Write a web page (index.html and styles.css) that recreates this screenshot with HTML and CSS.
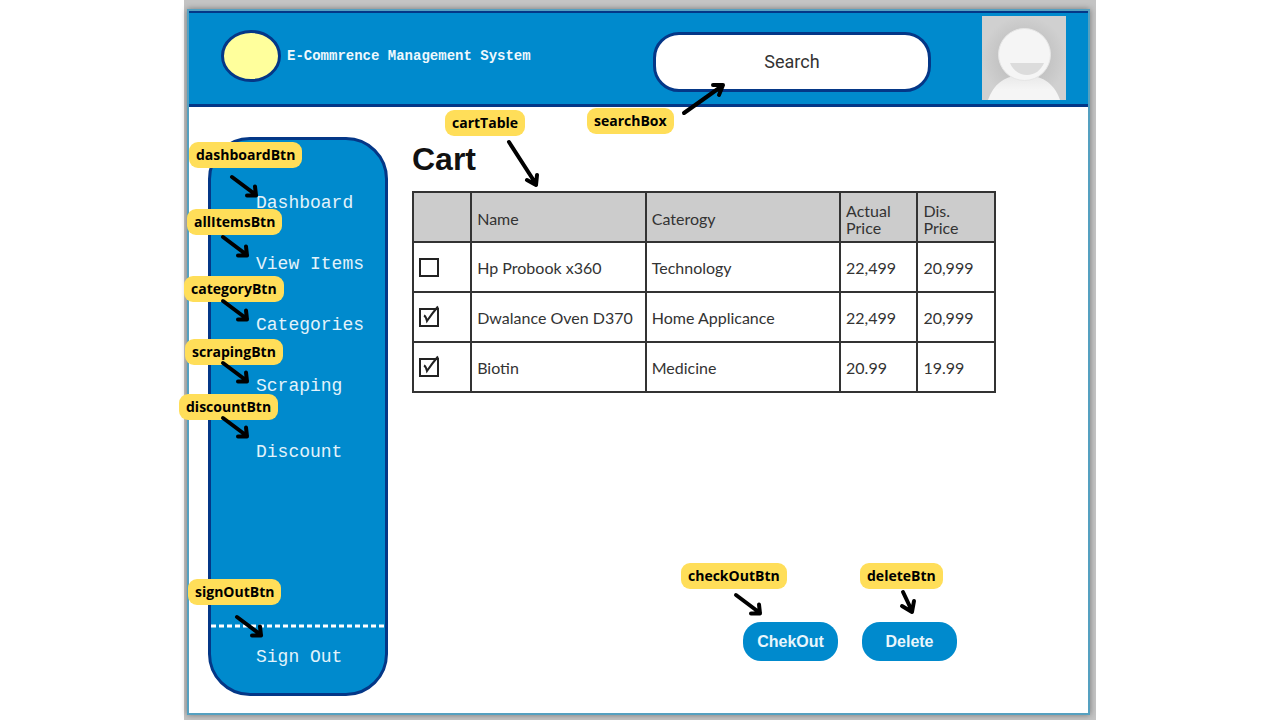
FILE: index.html
```html
<!DOCTYPE html>
<html lang="en">
<head>
<meta charset="utf-8">
<meta name="viewport" content="width=device-width, initial-scale=1">
<title>E-Commrence Management System</title>
<link rel="stylesheet" href="styles.css">
</head>
<body>
<svg class="defs" aria-hidden="true">
  <symbol id="arrow" viewBox="0 0 32 26"><path d="M3 3 27 21M26 12.500 27 21.500 18 21.500"/></symbol>
  <symbol id="tick" viewBox="0 0 20 22"><path d="M5 10.500 Q7 11.500 8 16 Q13 8.500 19 1.500"/></symbol>
</svg>
<div class="backdrop">
  <div class="frame">
    <header class="topbar">
      <div class="brand">
        <svg class="logo" viewBox="0 0 60 52" aria-hidden="true"><ellipse cx="30" cy="26" rx="28.500" ry="24.500"/></svg>
        <span class="brand-name">E-Commrence Management System</span>
      </div>
      <div class="search anchor">
        <input class="search-box" type="text" placeholder="Search" aria-label="Search">
        <div class="note note-search">searchBox
          <svg class="arrow arrow-search" viewBox="0 0 48 38" aria-hidden="true"><path d="M5 33 43 6M34 5 44 5 40 15"/></svg>
        </div>
      </div>
      <svg class="avatar" viewBox="0 0 84 84" role="img" aria-label="Profile picture">
        <defs>
          <radialGradient id="shade" cx="50%" cy="50%" r="50%"><stop offset="0.600" stop-color="#c4c4c4"/><stop offset="1" stop-color="#d0d0d0"/></radialGradient>
          <linearGradient id="body" x1="0" y1="0" x2="0" y2="1"><stop offset="0" stop-color="#e8e8e8"/><stop offset="0.600" stop-color="#f5f5f5"/></linearGradient>
        </defs>
        <rect width="84" height="84" fill="url(#shade)"/>
        <path d="M6 84C12 66 26 59 42 59s30 7 36 25z" fill="url(#body)"/>
        <circle cx="42.500" cy="38.500" r="26" fill="#f5f5f5" stroke="#e6e6e6"/>
        <path d="M28 47h34c-3 7-9 12-17 12s-14-5-17-12z" fill="#dcdcdc"/>
      </svg>
    </header>

    <div class="content">
      <nav class="sidebar" aria-label="Main">
        <ul class="menu">
          <li class="anchor"><button class="menu-btn" type="button">Dashboard</button>
            <div class="note note-dashboard">dashboardBtn<svg class="arrow" aria-hidden="true"><use href="#arrow"/></svg></div></li>
          <li class="anchor"><button class="menu-btn" type="button">View Items</button>
            <div class="note note-items">allItemsBtn<svg class="arrow" aria-hidden="true"><use href="#arrow"/></svg></div></li>
          <li class="anchor"><button class="menu-btn" type="button">Categories</button>
            <div class="note note-category">categoryBtn<svg class="arrow" aria-hidden="true"><use href="#arrow"/></svg></div></li>
          <li class="anchor"><button class="menu-btn" type="button">Scraping</button>
            <div class="note note-scraping">scrapingBtn<svg class="arrow" aria-hidden="true"><use href="#arrow"/></svg></div></li>
        </ul>
        <ul class="menu">
          <li class="anchor"><button class="menu-btn" type="button">Discount</button>
            <div class="note note-discount">discountBtn<svg class="arrow" aria-hidden="true"><use href="#arrow"/></svg></div></li>
        </ul>
        <div class="account anchor">
          <svg class="divider" aria-hidden="true"><line x1="0" y1="2" x2="100%" y2="2"/></svg>
          <button class="menu-btn" type="button">Sign Out</button>
          <div class="note note-signout">signOutBtn<svg class="arrow" aria-hidden="true"><use href="#arrow"/></svg></div>
        </div>
      </nav>

      <main class="cart">
        <h1 class="title">Cart</h1>
        <div class="table-wrap anchor">
          <table class="cart-table">
            <colgroup><col class="c-pick"><col class="c-name"><col class="c-cat"><col class="c-price"><col class="c-price"></colgroup>
            <thead>
              <tr><th></th><th>Name</th><th>Caterogy</th><th>Actual<br>Price</th><th>Dis.<br>Price</th></tr>
            </thead>
            <tbody>
              <tr><td><span class="tick"><input type="checkbox" aria-label="Hp Probook x360"><svg aria-hidden="true"><use href="#tick"/></svg></span></td><td>Hp Probook x360</td><td>Technology</td><td>22,499</td><td>20,999</td></tr>
              <tr><td><span class="tick"><input type="checkbox" checked aria-label="Dwalance Oven D370"><svg aria-hidden="true"><use href="#tick"/></svg></span></td><td>Dwalance Oven D370</td><td>Home Applicance</td><td>22,499</td><td>20,999</td></tr>
              <tr><td><span class="tick"><input type="checkbox" checked aria-label="Biotin"><svg aria-hidden="true"><use href="#tick"/></svg></span></td><td>Biotin</td><td>Medicine</td><td>20.99</td><td>19.99</td></tr>
            </tbody>
          </table>
          <div class="note note-table">cartTable
            <svg class="arrow arrow-table" viewBox="0 0 36 52" aria-hidden="true"><path d="M4 5 31 47M22 43 31 48 32 38"/></svg>
          </div>
        </div>
        <div class="actions">
          <div class="anchor"><button class="action" type="button">ChekOut</button>
            <div class="note note-checkout">checkOutBtn<svg class="arrow" aria-hidden="true"><use href="#arrow"/></svg></div></div>
          <div class="anchor"><button class="action" type="button">Delete</button>
            <div class="note note-delete">deleteBtn<svg class="arrow arrow-delete" viewBox="0 0 20 28" aria-hidden="true"><path d="M5 4 14 23M4 18 14 24 16 13"/></svg></div></div>
        </div>
      </main>
    </div>
  </div>
</div>
</body>
</html>
```
FILE: styles.css
```css
:root {
  --blue: #008acd;
  --navy: #043787;
  --ink: #333;
  --label: #ffde59;
}

* { box-sizing: border-box; }

body {
  margin: 0;
  background: #fff;
  font-family: "Liberation Sans", Arial, sans-serif;
}

.defs { display: none; }
.anchor { position: relative; }

.backdrop {
  display: flex;
  width: 100%;
  max-width: 912px;
  min-height: 100vh;
  margin: 0 auto;
  padding: 9px 6px 5px 3px;
  background: #c4c4c4;
}

.frame {
  display: flex;
  flex: 1;
  flex-direction: column;
  background: #fff;
  border: 2px solid #55a0c0;
  box-shadow: 0 0 6px rgba(0, 0, 0, 0.4);
}

.topbar {
  display: flex;
  align-items: center;
  min-height: 96px;
  padding: 0 22px 2px 32px;
  background: var(--blue);
  border-top: 2px solid var(--navy);
  border-bottom: 3px solid var(--navy);
}

.brand {
  display: flex;
  align-items: center;
  gap: 6px;
  padding-bottom: 4px;
}

.logo {
  width: 60px;
  height: 52px;
  fill: #ffff9c;
  stroke: var(--navy);
  stroke-width: 3;
}

.brand-name {
  color: #eef8fd;
  font: bold 14px/20px "Courier New", "Liberation Mono", monospace;
}

.search {
  width: 278px;
  margin: 8px 51px 0 auto;
}

.search-box {
  display: block;
  width: 100%;
  height: 60px;
  padding: 0 24px;
  border: 3px solid var(--navy);
  border-radius: 26px;
  background: #fff;
  color: var(--ink);
  font: 18px Roboto, "Liberation Sans", sans-serif;
  text-align: center;
  appearance: none;
}

.search-box::placeholder { color: var(--ink); opacity: 1; }

.avatar { width: 84px; height: 84px; }

.content {
  display: flex;
  flex: 1;
  gap: 24px;
  padding: 30px 20px 17px 19px;
}

.sidebar {
  display: flex;
  flex: 0 0 180px;
  flex-direction: column;
  gap: 40px;
  padding-top: 50px;
  background: var(--blue);
  border: 3px solid var(--navy);
  border-radius: 42px;
}

.menu {
  display: flex;
  flex-direction: column;
  gap: 35px;
  margin: 0;
  padding: 0;
  list-style: none;
}

.menu-btn {
  display: block;
  width: 100%;
  padding: 0 0 0 45px;
  border: 0;
  background: none;
  color: #e3f3fb;
  font: 18px/26px "Courier New", "Liberation Mono", monospace;
  text-align: left;
  white-space: nowrap;
}

.account {
  display: flex;
  flex-direction: column;
  gap: 16px;
  margin-top: auto;
  padding-bottom: 23px;
}

.divider {
  width: 100%;
  height: 4px;
  stroke: #fff;
  stroke-width: 3;
  stroke-dasharray: 5 3;
}

.cart {
  display: flex;
  flex: 1;
  flex-direction: column;
  min-width: 0;
}

.title {
  margin: 4px 0 14px;
  color: #111;
  font-size: 32px;
  line-height: 36px;
}

.table-wrap { width: 89%; }

.cart-table {
  width: 100%;
  border-collapse: collapse;
  table-layout: fixed;
  color: var(--ink);
  font: 16px/17px Lato, "Liberation Sans", sans-serif;
}

.c-pick { width: 10%; }
.c-name { width: 30%; }
.c-cat { width: 33.4%; }
.c-price { width: 13.3%; }

.cart-table th,
.cart-table td {
  height: 50px;
  padding: 0 5px;
  border: 2px solid var(--ink);
  font-weight: 400;
  text-align: left;
}

.cart-table th { background: #ccc; padding-top: 3px; }

.tick {
  display: block;
  position: relative;
  width: 20px;
  height: 19px;
}

.tick input {
  display: block;
  width: 100%;
  height: 100%;
  margin: 0;
  border: 2px solid #222;
  appearance: none;
}

.tick svg {
  display: none;
  position: absolute;
  left: 0;
  bottom: 0;
  width: 20px;
  height: 22px;
  fill: none;
  stroke: #222;
  stroke-width: 2;
  pointer-events: none;
}

.tick input:checked + svg { display: block; }

.actions {
  display: flex;
  justify-content: flex-end;
  gap: 24px;
  margin-top: auto;
  padding: 0 111px 35px 0;
}

.action {
  display: block;
  width: 95px;
  height: 39px;
  padding: 0;
  border: 0;
  border-radius: 18px;
  background: var(--blue);
  color: #e9f6fc;
  font: bold 16px "Liberation Sans", Arial, sans-serif;
}

/* Callout labels, each placed relative to the control it names */
.note {
  position: absolute;
  z-index: 2;
  padding: 0 7px;
  border-radius: 9px;
  background: var(--label);
  color: #000;
  font: 700 14px/26px "Open Sans", Inter, sans-serif;
  white-space: nowrap;
}

.arrow {
  position: absolute;
  width: 32px;
  height: 26px;
  fill: none;
  stroke: #000;
  stroke-width: 4;
  stroke-linecap: round;
  stroke-linejoin: round;
}

.note-dashboard { left: -22px; top: -48px; }
.note-dashboard .arrow { left: 40px; top: 32px; }
.note-items { left: -24px; top: -42px; }
.note-items .arrow { left: 33px; top: 25px; }
.note-category { left: -27px; top: -36px; }
.note-category .arrow { left: 36px; top: 22px; }
.note-scraping { left: -26px; top: -34px; }
.note-scraping .arrow { left: 35px; top: 21px; }
.note-discount { left: -32px; top: -45px; }
.note-discount .arrow { left: 41px; top: 21px; }
.note-signout { left: -23px; top: -45px; }
.note-signout .arrow { left: 46px; top: 35px; }
.note-search { left: -66px; top: 76px; }
.note-search .arrow { left: 92px; top: -28px; width: 48px; height: 38px; }
.note-table { left: 33px; top: -81px; }
.note-table .arrow { left: 60px; top: 27px; width: 36px; height: 52px; }
.note-checkout { left: -62px; top: -59px; }
.note-checkout .arrow { left: 52px; top: 29px; }
.note-delete { left: -2px; top: -59px; }
.note-delete .arrow { left: 38px; top: 25px; width: 20px; height: 28px; }
```
